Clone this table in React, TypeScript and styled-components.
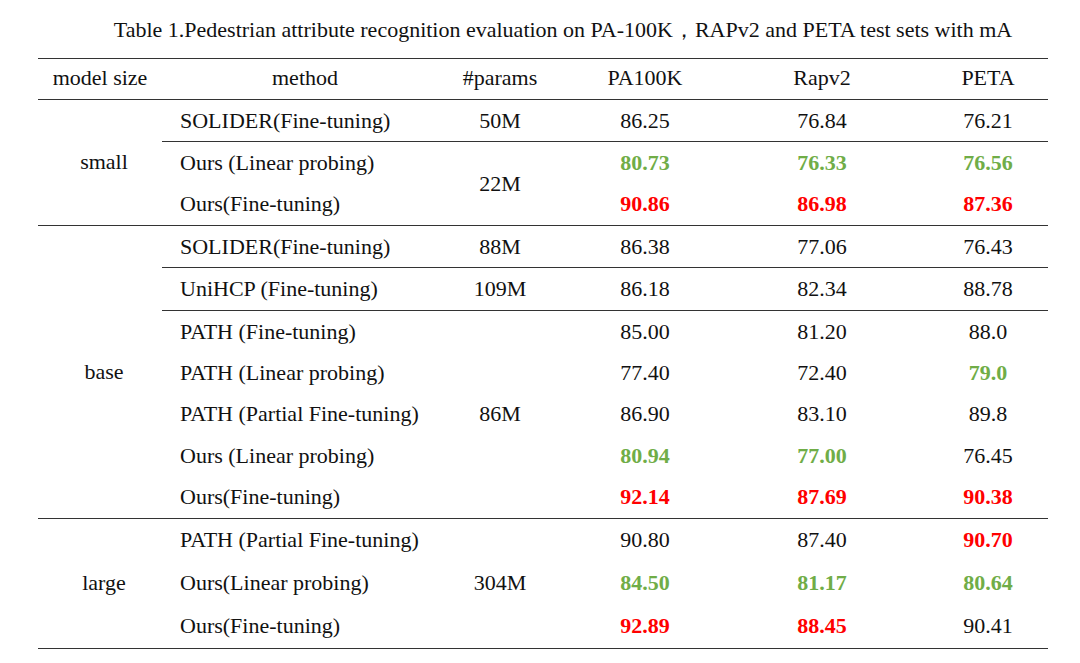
import React from 'react';
import styled, {createGlobalStyle} from 'styled-components';

const GlobalStyle = createGlobalStyle`
	html, body {
		margin: 0;
		padding: 0;
		background: #ffffff;
	}
	body {
		font-family: 'Liberation Serif', 'Times New Roman', serif;
		color: #111111;
	}
`;

const COLUMNS = '286px 104px 186px 168px 142px';
const LINE = '1px solid #333333';

type Tone = 'plain' | 'green' | 'red';

type Row = {
	method: string;
	values: [string, Tone][];
};

type Block = {
	params: string;
	rows: Row[];
};

type Group = {
	size: string;
	rowHeight: number;
	blocks: Block[];
};

const p = (v: string): [string, Tone] => [v, 'plain'];
const g = (v: string): [string, Tone] => [v, 'green'];
const r = (v: string): [string, Tone] => [v, 'red'];

const groups: Group[] = [
	{
		size: 'small',
		rowHeight: 41.33,
		blocks: [
			{params: '50M', rows: [{method: 'SOLIDER(Fine-tuning)', values: [p('86.25'), p('76.84'), p('76.21')]}]},
			{
				params: '22M',
				rows: [
					{method: 'Ours (Linear probing)', values: [g('80.73'), g('76.33'), g('76.56')]},
					{method: 'Ours(Fine-tuning)', values: [r('90.86'), r('86.98'), r('87.36')]},
				],
			},
		],
	},
	{
		size: 'base',
		rowHeight: 41.43,
		blocks: [
			{params: '88M', rows: [{method: 'SOLIDER(Fine-tuning)', values: [p('86.38'), p('77.06'), p('76.43')]}]},
			{params: '109M', rows: [{method: 'UniHCP (Fine-tuning)', values: [p('86.18'), p('82.34'), p('88.78')]}]},
			{
				params: '86M',
				rows: [
					{method: 'PATH (Fine-tuning)', values: [p('85.00'), p('81.20'), p('88.0')]},
					{method: 'PATH (Linear probing)', values: [p('77.40'), p('72.40'), g('79.0')]},
					{method: 'PATH (Partial Fine-tuning)', values: [p('86.90'), p('83.10'), p('89.8')]},
					{method: 'Ours (Linear probing)', values: [g('80.94'), g('77.00'), p('76.45')]},
					{method: 'Ours(Fine-tuning)', values: [r('92.14'), r('87.69'), r('90.38')]},
				],
			},
		],
	},
	{
		size: 'large',
		rowHeight: 43,
		blocks: [
			{
				params: '304M',
				rows: [
					{method: 'PATH (Partial Fine-tuning)', values: [p('90.80'), p('87.40'), r('90.70')]},
					{method: 'Ours(Linear probing)', values: [g('84.50'), g('81.17'), g('80.64')]},
					{method: 'Ours(Fine-tuning)', values: [r('92.89'), r('88.45'), p('90.41')]},
				],
			},
		],
	},
];

const Page = styled.div`
	width: 1080px;
	padding-top: 17px;
`;

const Caption = styled.div`
	padding-left: 46px;
	text-align: center;
	font-size: 22px;
	line-height: 26px;
	color: #111111;
	margin-bottom: 15px;
`;

const Table = styled.div`
	margin-left: 38px;
	width: 1010px;
	border-top: ${LINE};
	border-bottom: ${LINE};
	font-size: 22px;
`;

const HeaderRow = styled.div`
	display: grid;
	grid-template-columns: 124px ${COLUMNS};
	height: 41px;
	align-items: center;
	padding-bottom: 2px;
	box-sizing: border-box;
	border-bottom: ${LINE};
`;

const HeadCell = styled.div<{$pad?: number}>`
	text-align: center;
	padding-left: ${(props) => props.$pad ?? 0}px;
`;

const GroupRow = styled.div`
	display: grid;
	grid-template-columns: 124px 886px;
	& + & {
		border-top: ${LINE};
	}
`;

const SizeCell = styled.div`
	display: flex;
	align-items: center;
	justify-content: center;
	padding-left: 8px;
`;

const Blocks = styled.div`
	display: flex;
	flex-direction: column;
`;

const BlockGrid = styled.div<{$rowHeight: number}>`
	display: grid;
	grid-template-columns: ${COLUMNS};
	grid-auto-rows: ${(props) => props.$rowHeight}px;
	align-items: center;
	& + & {
		border-top: ${LINE};
	}
`;

const MethodCell = styled.div<{$row: number}>`
	grid-column: 1;
	grid-row: ${(props) => props.$row};
	padding-left: 18px;
	white-space: nowrap;
`;

const ParamCell = styled.div<{$span: number}>`
	grid-column: 2;
	grid-row: 1 / span ${(props) => props.$span};
	align-self: center;
	text-align: center;
`;

const ValueCell = styled.div<{$row: number; $col: number; $tone: Tone; $pad: number}>`
	grid-column: ${(props) => props.$col};
	grid-row: ${(props) => props.$row};
	text-align: center;
	padding-left: ${(props) => props.$pad}px;
	font-weight: ${(props) => (props.$tone === 'plain' ? 'normal' : 'bold')};
	color: ${(props) =>
		props.$tone === 'green' ? '#70ad47' : props.$tone === 'red' ? '#ff0000' : '#111111'};
`;

const valuePads = [0, 0, 22];

export default function App() {
	return (
		<Page>
			<GlobalStyle />
			<Caption>
				Table 1.Pedestrian attribute recognition evaluation on PA-100K，RAPv2 and PETA test sets with mA
			</Caption>
			<Table>
				<HeaderRow>
					<HeadCell>model size</HeadCell>
					<HeadCell>method</HeadCell>
					<HeadCell>#params</HeadCell>
					<HeadCell>PA100K</HeadCell>
					<HeadCell>Rapv2</HeadCell>
					<HeadCell $pad={22}>PETA</HeadCell>
				</HeaderRow>
				{groups.map((group) => (
					<GroupRow key={group.size}>
						<SizeCell>{group.size}</SizeCell>
						<Blocks>
							{group.blocks.map((block) => (
								<BlockGrid key={block.params} $rowHeight={group.rowHeight}>
									<ParamCell $span={block.rows.length}>{block.params}</ParamCell>
									{block.rows.map((row, i) => (
										<React.Fragment key={row.method + i}>
											<MethodCell $row={i + 1}>{row.method}</MethodCell>
											{row.values.map(([v, tone], j) => (
												<ValueCell key={j} $row={i + 1} $col={j + 3} $tone={tone} $pad={valuePads[j]}>
													{v}
												</ValueCell>
											))}
										</React.Fragment>
									))}
								</BlockGrid>
							))}
						</Blocks>
					</GroupRow>
				))}
			</Table>
		</Page>
	);
}
